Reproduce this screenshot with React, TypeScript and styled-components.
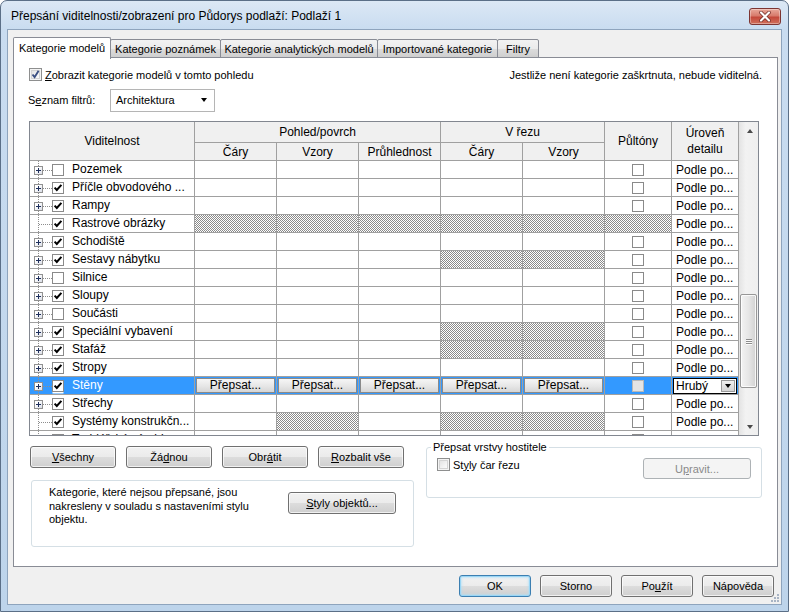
import React from 'react';
import styled, { createGlobalStyle } from 'styled-components';

const GlobalStyle = createGlobalStyle`
  html, body { margin: 0; padding: 0; background: #fff; }
  body {
    font-family: "Liberation Sans", Arial, sans-serif;
    font-size: 11px;
    color: #000;
  }
  * { box-sizing: border-box; }
`;

const COLS = '165px 82px 82px 82px 82px 82px 67px 67px';
const GRID = '#a0a0a0';
const UI_FONT = '"Liberation Sans", Arial, sans-serif';

// ---------- window chrome ----------

const Window = styled.div`
  width: 789px;
  height: 612px;
  display: flex;
  flex-direction: column;
  border: 1px solid #5b6f87;
  border-radius: 7px 7px 0 0;
  background: linear-gradient(180deg, #dce8f5 0px, #c9dcf0 28px, #bdd4eb 100%);
  padding: 0 6px 6px 6px;
`;

const TitleBar = styled.div`
  height: 28px;
  display: flex;
  align-items: center;
  justify-content: space-between;
  padding: 2px 1px 0 4px;
`;

const Title = styled.div`
  font-size: 12px;
  color: #000;
`;

const CloseButton = styled.div`
  width: 32px;
  height: 17px;
  margin-top: 1px;
  border: 1px solid #7d3532;
  border-radius: 3px;
  background: linear-gradient(180deg, #e9a99b 0%, #d77b6c 45%, #c4493b 55%, #d0705c 100%);
  box-shadow: inset 0 0 0 1px rgba(255, 255, 255, 0.35);
  display: flex;
  align-items: center;
  justify-content: center;
`;

const Client = styled.div`
  flex: 1;
  position: relative;
  display: flex;
  flex-direction: column;
  background: #f0f0f0;
  border: 1px solid #8ea4bd;
`;

// ---------- tabs ----------

const TabStrip = styled.div`
  display: flex;
  align-items: flex-end;
  height: 21px;
  margin-top: 7px;
  padding-left: 5px;
  position: relative;
  z-index: 1;
`;

const Tab = styled.div<{ $w: number; $active?: boolean }>`
  width: ${(p) => p.$w}px;
  height: ${(p) => (p.$active ? 22 : 19)}px;
  margin-left: ${(p) => (p.$active ? 0 : -1)}px;
  margin-bottom: ${(p) => (p.$active ? -1 : 0)}px;
  display: flex;
  align-items: center;
  justify-content: center;
  padding-bottom: ${(p) => (p.$active ? 1 : 0)}px;
  border: 1px solid #898c95;
  border-bottom: ${(p) => (p.$active ? 'none' : '1px solid #898c95')};
  border-radius: 2px 2px 0 0;
  background: ${(p) =>
    p.$active
      ? '#fff'
      : 'linear-gradient(180deg, #f2f2f2 0%, #ebebeb 50%, #dddddd 50%, #cfcfcf 100%)'};
  position: relative;
  z-index: ${(p) => (p.$active ? 2 : 1)};
  white-space: nowrap;
`;

const Panel = styled.div`
  height: 510px;
  margin: -1px 3px 0 5px;
  border: 1px solid #898c95;
  background: #fff;
  padding: 0 15px;
  display: flex;
  flex-direction: column;
`;

// ---------- top options ----------

const TopRow = styled.div`
  margin-top: 9px;
  height: 15px;
  display: flex;
  align-items: center;
  justify-content: space-between;
`;

const CheckLabel = styled.label`
  display: flex;
  align-items: center;
  gap: 3px;
`;

const FilterRow = styled.div`
  margin-top: 7px;
  height: 22px;
  display: flex;
  align-items: center;
`;

const FilterLabel = styled.span`
  width: 82px;
  margin-left: -1px;
`;

const Combo = styled.div`
  width: 105px;
  height: 23px;
  border: 1px solid #b5b5b5;
  background: #fff;
  display: flex;
  align-items: center;
  justify-content: space-between;
  padding: 0 7px 0 5px;
`;

const Triangle = styled.span<{ $up?: boolean; $color?: string }>`
  width: 0;
  height: 0;
  border-left: 3.5px solid transparent;
  border-right: 3.5px solid transparent;
  ${(p) =>
    p.$up
      ? `border-bottom: 4px solid ${p.$color || '#000'};`
      : `border-top: 4px solid ${p.$color || '#000'};`}
`;

// ---------- win7 checkbox ----------

const WinBox = styled.span`
  width: 13px;
  height: 13px;
  flex: none;
  border: 1px solid #8e8f8f;
  background: linear-gradient(135deg, #dcdcdc 0%, #f4f4f4 60%, #ffffff 100%);
  box-shadow: inset 0 0 0 1px #f4f4f4, inset 0 0 0 2px #d4d4d4;
  display: flex;
  align-items: center;
  justify-content: center;
`;

const WinCheck: React.FC<{ checked?: boolean }> = ({ checked }) => (
  <WinBox>
    {checked && (
      <svg width="11" height="11" viewBox="0 0 11 11">
        <path d="M2.5 5.5 L4.6 8.2 L8.6 1.8" fill="none" stroke="#3b4f82" strokeWidth="1.9" />
      </svg>
    )}
  </WinBox>
);

// ---------- grid ----------

const GridFrame = styled.div`
  margin-top: 10px;
  width: 730px;
  height: 315px;
  border: 1px solid #828790;
  display: flex;
  overflow: hidden;
`;

const GridBody = styled.div`
  width: 709px;
  overflow: hidden;
  font-size: 12px;
`;

const HeaderGrid = styled.div`
  display: grid;
  grid-template-columns: ${COLS};
  grid-template-rows: 21px 18px;
  background: #f0f0f0;
`;

const HeadCell = styled.div<{ $col: string; $row: string; $lh?: number }>`
  grid-column: ${(p) => p.$col};
  grid-row: ${(p) => p.$row};
  border-right: 1px solid ${GRID};
  border-bottom: 1px solid ${GRID};
  display: flex;
  align-items: center;
  justify-content: center;
  text-align: center;
  line-height: ${(p) => p.$lh || 14}px;
`;

const BodyRow = styled.div<{ $selected?: boolean }>`
  display: grid;
  grid-template-columns: ${COLS};
  height: 18px;
  background: ${(p) => (p.$selected ? '#3399ff' : '#fff')};
  color: ${(p) => (p.$selected ? '#fff' : '#000')};
`;

const Cell = styled.div<{ $center?: boolean }>`
  border-right: 1px solid ${GRID};
  border-bottom: 1px solid ${GRID};
  display: flex;
  align-items: center;
  justify-content: ${(p) => (p.$center ? 'center' : 'flex-start')};
  overflow: hidden;
  white-space: nowrap;
`;

const HatchFill = styled.svg`
  display: block;
  width: 100%;
  height: 100%;
  background: #fff;
`;

const Hatch: React.FC = () => (
  <HatchFill>
    <rect width="100%" height="100%" fill="url(#vg-hatch)" />
  </HatchFill>
);

const NameCell = styled(Cell)`
  align-items: flex-start;
`;

const Gutter = styled.div`
  width: 22px;
  height: 17px;
  flex: none;
  position: relative;
  &::before {
    content: '';
    position: absolute;
    left: 8px;
    top: 0;
    bottom: 0;
    border-left: 1px dotted #8d8d8d;
  }
  &::after {
    content: '';
    position: absolute;
    left: 9px;
    right: 0;
    top: 9px;
    border-top: 1px dotted #8d8d8d;
  }
`;

const Expander = styled.span`
  position: absolute;
  left: 4px;
  top: 5px;
  width: 9px;
  height: 9px;
  z-index: 1;
  border: 1px solid #919191;
  background: linear-gradient(135deg, #ffffff 30%, #d9dde6 100%);
  display: flex;
  align-items: center;
  justify-content: center;
`;

const GridBox = styled.span<{ $disabled?: boolean; $focus?: boolean }>`
  width: 12px;
  height: 12px;
  flex: none;
  margin-top: 3px;
  border: 1px solid ${(p) => (p.$disabled ? '#b8b8b8' : '#8a8a8a')};
  background: ${(p) => (p.$disabled ? '#e4e4e4' : '#fff')};
  display: flex;
  align-items: center;
  justify-content: center;
  box-shadow: ${(p) => (p.$focus ? '0 2px 0 -0.5px #fff' : 'none')};
`;

const CenterBox = styled(GridBox)`
  margin-top: 0;
`;

const NameText = styled.span`
  margin-left: 8px;
  line-height: 17px;
`;

const OverrideButton = styled.div`
  flex: 1;
  align-self: flex-start;
  height: 15px;
  margin: 1px 1px 0 1px;
  border: 1px solid #8a8a8a;
  background: linear-gradient(180deg, #f6f6f6 0%, #e6e6e6 55%, #d6d6d6 100%);
  color: #000;
  display: flex;
  align-items: center;
  justify-content: center;
  line-height: 13px;
`;

const DetailCombo = styled.div`
  flex: 1;
  align-self: flex-start;
  height: 16px;
  margin: 1px 1px 0 1px;
  border: 1px solid #000;
  background: #fff;
  color: #000;
  display: flex;
  align-items: center;
  justify-content: space-between;
  padding-left: 2px;
  line-height: 14px;
`;

const DropBtn = styled.span`
  width: 14px;
  height: 12px;
  margin-right: 1px;
  background: linear-gradient(180deg, #f0f0f0, #d4d4d4);
  border: 1px solid #9a9a9a;
  display: flex;
  align-items: center;
  justify-content: center;
`;

const DetailText = styled.span`
  padding-left: 4px;
`;

// ---------- scrollbar ----------

const ScrollBar = styled.div`
  width: 19px;
  display: flex;
  flex-direction: column;
  background: linear-gradient(90deg, #e3e3e3 0%, #f2f2f2 35%, #efefef 100%);
`;

const ArrowBtn = styled.div`
  height: 17px;
  display: flex;
  align-items: center;
  justify-content: center;
  padding-left: 2px;
`;

const Track = styled.div`
  flex: 1;
  display: flex;
  flex-direction: column;
  align-items: center;
`;

const Thumb = styled.div`
  width: 17px;
  height: 94px;
  margin-top: 155px;
  border: 1px solid #979797;
  border-radius: 2px;
  background: linear-gradient(90deg, #f3f3f3 0%, #e6e6e6 50%, #d2d2d2 100%);
  box-shadow: inset 0 0 0 1px rgba(255, 255, 255, 0.8);
  display: flex;
  flex-direction: column;
  align-items: center;
  justify-content: center;
  gap: 1px;
`;

const GripLine = styled.span`
  width: 6px;
  height: 1px;
  background: #8c8c8c;
  box-shadow: 0 1px 0 #fbfbfb;
`;

// ---------- lower section ----------

const Lower = styled.div`
  display: grid;
  grid-template-columns: 397px 1fr;
`;

const LeftCol = styled.div`
  display: flex;
  flex-direction: column;
`;

const ButtonRow = styled.div`
  display: flex;
  gap: 10px;
  margin-top: 10px;
  padding-left: 1px;
`;

const Button = styled.div<{ $w: number; $h?: number; $default?: boolean; $disabled?: boolean }>`
  width: ${(p) => p.$w}px;
  height: ${(p) => p.$h || 22}px;
  flex: none;
  font-family: ${UI_FONT};
  font-size: 11px;
  color: ${(p) => (p.$disabled ? '#8a8a8a' : '#000')};
  border: 1px solid ${(p) => (p.$default ? '#3c7fb1' : p.$disabled ? '#adb2b5' : '#707070')};
  border-radius: 3px;
  background: ${(p) =>
    p.$disabled
      ? '#f4f4f4'
      : 'linear-gradient(180deg, #f2f2f2 0%, #ebebeb 50%, #dddddd 50%, #cfcfcf 100%)'};
  box-shadow: ${(p) =>
    p.$disabled
      ? 'none'
      : p.$default
        ? 'inset 0 0 0 1px #9ad6f5, inset 0 0 2px 2px rgba(170, 222, 248, 0.6)'
        : 'inset 0 0 0 1px rgba(255, 255, 255, 0.7)'};
  display: flex;
  align-items: center;
  justify-content: center;
  white-space: nowrap;
`;

const InfoBox = styled.div`
  margin: 12px 0 0 2px;
  width: 383px;
  height: 67px;
  border: 1px solid #d5dfe5;
  border-radius: 3px;
  display: flex;
  justify-content: space-between;
  align-items: flex-start;
  padding: 5px 17px 0 17px;
`;

const InfoText = styled.div`
  line-height: 13.5px;
`;

const InfoButtonWrap = styled.div`
  margin-top: 6px;
`;

const GroupBox = styled.fieldset`
  margin: 5px 0 0 0;
  height: 57px;
  border: 1px solid #d5dfe5;
  border-radius: 3px;
  padding: 2px 10px 0 10px;
  display: flex;
  justify-content: space-between;
  align-items: flex-start;
`;

const Legend = styled.legend`
  padding: 0 2px;
  margin-left: -6px;
  line-height: 13px;
`;

const GroupCheck = styled.label`
  display: flex;
  align-items: center;
  gap: 3px;
  margin-top: 2px;
`;

const GroupButtonWrap = styled.div`
  margin-top: 2px;
`;

// ---------- footer ----------

const Footer = styled.div`
  display: flex;
  justify-content: flex-end;
  gap: 9px;
  margin-top: 8px;
  padding-right: 7px;
`;

const Grip = styled.svg`
  position: absolute;
  right: 1px;
  bottom: 1px;
`;

const Defs = styled.svg`
  position: absolute;
  width: 0;
  height: 0;
`;

// ---------- data ----------

type Row = {
  name: string;
  checked: boolean;
  expand: boolean;
  hatch?: number[];
  selected?: boolean;
};

const rows: Row[] = [
  { name: 'Pozemek', checked: false, expand: true },
  { name: 'Příčle obvodového ...', checked: true, expand: true },
  { name: 'Rampy', checked: true, expand: true },
  { name: 'Rastrové obrázky', checked: true, expand: false, hatch: [0, 1, 2, 3, 4, 5] },
  { name: 'Schodiště', checked: true, expand: true },
  { name: 'Sestavy nábytku', checked: true, expand: true, hatch: [3, 4] },
  { name: 'Silnice', checked: false, expand: true },
  { name: 'Sloupy', checked: true, expand: true },
  { name: 'Součásti', checked: false, expand: true },
  { name: 'Speciální vybavení', checked: true, expand: true, hatch: [3, 4] },
  { name: 'Stafáž', checked: true, expand: true, hatch: [3, 4] },
  { name: 'Stropy', checked: true, expand: true },
  { name: 'Stěny', checked: true, expand: true, selected: true },
  { name: 'Střechy', checked: true, expand: true },
  { name: 'Systémy konstrukčn...', checked: true, expand: false, hatch: [1, 3, 4] },
  { name: 'Truhlářské výrobky', checked: false, expand: true },
];

const Tick: React.FC = () => (
  <svg width="10" height="10" viewBox="0 0 10 10">
    <path d="M1.6 4.6 L3.8 7 L8.4 1.8" fill="none" stroke="#000" strokeWidth="2" />
  </svg>
);

const Plus: React.FC = () => (
  <svg width="7" height="7" viewBox="0 0 7 7">
    <path d="M1 3.5 H6 M3.5 1 V6" stroke="#1e2f5c" strokeWidth="1" />
  </svg>
);

const GridRow: React.FC<{ row: Row }> = ({ row }) => {
  const hatch = row.hatch || [];
  return (
    <BodyRow $selected={row.selected}>
      <NameCell>
        <Gutter>{row.expand && <Expander><Plus /></Expander>}</Gutter>
        <GridBox $focus={row.selected}>{row.checked && <Tick />}</GridBox>
        <NameText>{row.name}</NameText>
      </NameCell>
      {[0, 1, 2, 3, 4].map((i) => (
        <Cell key={i}>
          {hatch.includes(i) && <Hatch />}
          {row.selected && <OverrideButton>Přepsat...</OverrideButton>}
        </Cell>
      ))}
      <Cell $center>
        {hatch.includes(5) ? <Hatch /> : <CenterBox $disabled={row.selected} />}
      </Cell>
      <Cell>
        {row.selected ? (
          <DetailCombo>
            Hrubý
            <DropBtn>
              <Triangle />
            </DropBtn>
          </DetailCombo>
        ) : (
          <DetailText>Podle po...</DetailText>
        )}
      </Cell>
    </BodyRow>
  );
};

export default function App() {
  return (
    <>
      <GlobalStyle />
      <Defs>
        <defs>
          <pattern id="vg-hatch" width="2" height="2" patternUnits="userSpaceOnUse">
            <rect x="0" y="0" width="1" height="1" fill="#8a8a8a" />
            <rect x="1" y="1" width="1" height="1" fill="#8a8a8a" />
          </pattern>
        </defs>
      </Defs>
      <Window>
        <TitleBar>
          <Title>Přepsání viditelnosti/zobrazení pro Půdorys podlaží: Podlaží 1</Title>
          <CloseButton>
            <svg width="14" height="11" viewBox="0 0 14 11">
              <path d="M3 1.5 L11 9.5 M11 1.5 L3 9.5" stroke="#6e2a24" strokeWidth="3.6" strokeLinecap="round" />
              <path d="M3 1.5 L11 9.5 M11 1.5 L3 9.5" stroke="#fff" strokeWidth="2.2" strokeLinecap="round" />
            </svg>
          </CloseButton>
        </TitleBar>

        <Client>
          <TabStrip>
            <Tab $w={98} $active>Kategorie modelů</Tab>
            <Tab $w={111}>Kategorie poznámek</Tab>
            <Tab $w={158}>Kategorie analytických modelů</Tab>
            <Tab $w={121}>Importované kategorie</Tab>
            <Tab $w={42}>Filtry</Tab>
          </TabStrip>

          <Panel>
            <TopRow>
              <CheckLabel>
                <WinCheck checked />
                <span><u>Z</u>obrazit kategorie modelů v tomto pohledu</span>
              </CheckLabel>
              <span>Jestliže není kategorie zaškrtnuta, nebude viditelná.</span>
            </TopRow>

            <FilterRow>
              <FilterLabel>S<u>e</u>znam filtrů:</FilterLabel>
              <Combo>
                Architektura
                <Triangle />
              </Combo>
            </FilterRow>

            <GridFrame>
              <GridBody>
                <HeaderGrid>
                  <HeadCell $col="1" $row="1 / 3">Viditelnost</HeadCell>
                  <HeadCell $col="2 / 5" $row="1">Pohled/povrch</HeadCell>
                  <HeadCell $col="5 / 7" $row="1">V řezu</HeadCell>
                  <HeadCell $col="7" $row="1 / 3">Půltóny</HeadCell>
                  <HeadCell $col="8" $row="1 / 3" $lh={16}>
                    Úroveň
                    <br />
                    detailu
                  </HeadCell>
                  <HeadCell $col="2" $row="2">Čáry</HeadCell>
                  <HeadCell $col="3" $row="2">Vzory</HeadCell>
                  <HeadCell $col="4" $row="2">Průhlednost</HeadCell>
                  <HeadCell $col="5" $row="2">Čáry</HeadCell>
                  <HeadCell $col="6" $row="2">Vzory</HeadCell>
                </HeaderGrid>
                {rows.map((r) => (
                  <GridRow key={r.name} row={r} />
                ))}
              </GridBody>
              <ScrollBar>
                <ArrowBtn>
                  <Triangle $up $color="#4a4a4a" />
                </ArrowBtn>
                <Track>
                  <Thumb>
                    <GripLine />
                    <GripLine />
                    <GripLine />
                  </Thumb>
                </Track>
                <ArrowBtn>
                  <Triangle $color="#4a4a4a" />
                </ArrowBtn>
              </ScrollBar>
            </GridFrame>

            <Lower>
              <LeftCol>
                <ButtonRow>
                  <Button $w={86}><u>V</u>šechny</Button>
                  <Button $w={86}>Žá<u>d</u>nou</Button>
                  <Button $w={86}>Obr<u>á</u>tit</Button>
                  <Button $w={86}><u>R</u>ozbalit vše</Button>
                </ButtonRow>
                <InfoBox>
                  <InfoText>
                    Kategorie, které nejsou přepsané, jsou
                    <br />
                    nakresleny v souladu s nastaveními stylu
                    <br />
                    objektu.
                  </InfoText>
                  <InfoButtonWrap>
                    <Button $w={108}><u>S</u>tyly objektů...</Button>
                  </InfoButtonWrap>
                </InfoBox>
              </LeftCol>

              <GroupBox>
                <Legend>Přepsat vrstvy hostitele</Legend>
                <GroupCheck>
                  <WinCheck />
                  <span>St<u>y</u>ly čar řezu</span>
                </GroupCheck>
                <GroupButtonWrap>
                  <Button $w={108} $h={21} $disabled>U<u>p</u>ravit...</Button>
                </GroupButtonWrap>
              </GroupBox>
            </Lower>
          </Panel>

          <Footer>
            <Button $w={72} $default>OK</Button>
            <Button $w={72}>Storno</Button>
            <Button $w={72}>Po<u>u</u>žít</Button>
            <Button $w={72}>Nápověda</Button>
          </Footer>

          <Grip width="10" height="10" viewBox="0 0 10 10">
            {[
              [8, 2],
              [8, 5],
              [5, 5],
              [8, 8],
              [5, 8],
              [2, 8],
            ].map(([x, y]) => (
              <rect key={`${x}-${y}`} x={x - 1} y={y - 1} width="2" height="2" fill="#a8b4c4" />
            ))}
          </Grip>
        </Client>
      </Window>
    </>
  );
}
